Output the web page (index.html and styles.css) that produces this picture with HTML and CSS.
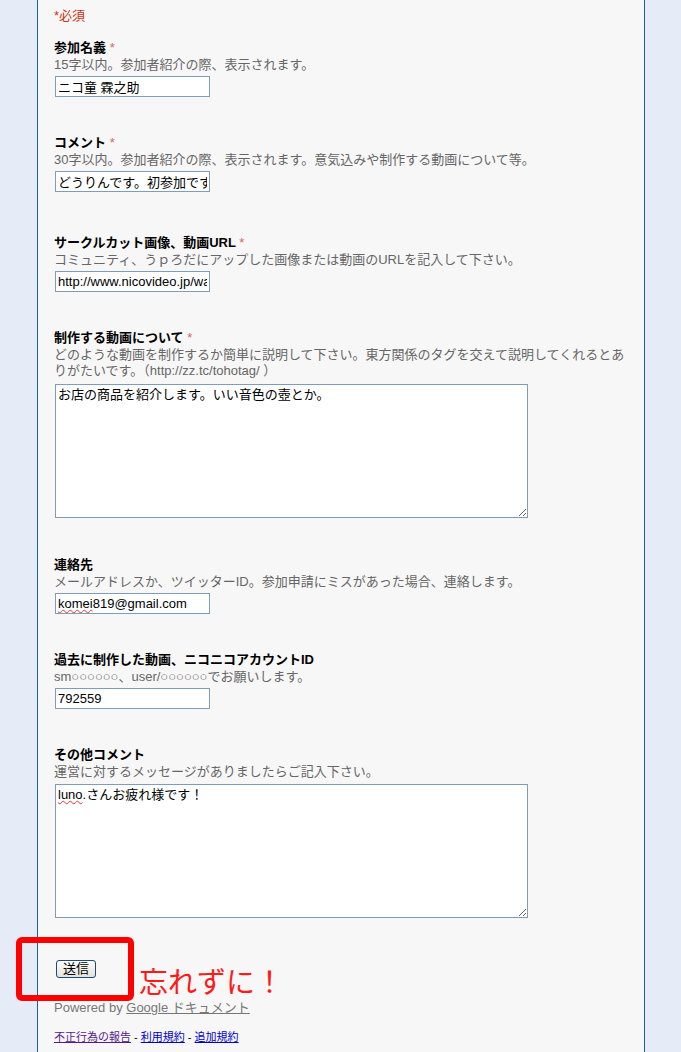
FILE: index.html
```html
<!DOCTYPE html>
<html lang="ja">
<head>
<meta charset="UTF-8">
<title>参加申請フォーム</title>
<link rel="stylesheet" href="styles.css">
</head>
<body>

<div class="form-container">
  <div class="required-note">*必須</div>

  <div class="item first">
    <div class="q-title">参加名義 <span class="req">*</span></div>
    <div class="q-help">15字以内。参加者紹介の際、表示されます。</div>
    <input type="text" class="q-text" value="ニコ童 霖之助">
  </div>

  <div class="item">
    <div class="q-title">コメント <span class="req">*</span></div>
    <div class="q-help">30字以内。参加者紹介の際、表示されます。意気込みや制作する動画について等。</div>
    <input type="text" class="q-text" value="どうりんです。初参加です。よろしくお願いします。">
  </div>

  <div class="item wide-gap">
    <div class="q-title">サークルカット画像、動画URL <span class="req">*</span></div>
    <div class="q-help">コミュニティ、うｐろだにアップした画像または動画のURLを記入して下さい。</div>
    <input type="text" class="q-text" value="http://www.nicovideo.jp/watch/sm">
  </div>

  <div class="item">
    <div class="q-title">制作する動画について <span class="req">*</span></div>
    <div class="q-help">どのような動画を制作するか簡単に説明して下さい。東方関係のタグを交えて説明してくれるとありがたいです。（http://zz.tc/tohotag/ ）</div>
    <textarea class="q-area tall-help">お店の商品を紹介します。いい音色の壺とか。</textarea>
  </div>

  <div class="item after-area">
    <div class="q-title">連絡先</div>
    <div class="q-help">メールアドレスか、ツイッターID。参加申請にミスがあった場合、連絡します。</div>
    <div class="q-text fake"><span class="typo">komei</span>819@gmail.com</div>
  </div>

  <div class="item">
    <div class="q-title">過去に制作した動画、ニコニコアカウントID</div>
    <div class="q-help">sm○○○○○○、user/○○○○○○でお願いします。</div>
    <input type="text" class="q-text" value="792559">
  </div>

  <div class="item">
    <div class="q-title">その他コメント</div>
    <div class="q-help">運営に対するメッセージがありましたらご記入下さい。</div>
    <div class="q-area fake"><span class="typo">luno</span>.さんお疲れ様です！</div>
  </div>

  <div class="submit-row">
    <button class="submit-btn">送信</button>
    <div class="mark-box"></div>
    <div class="mark-text">忘れずに！</div>
  </div>

  <div class="powered">Powered by <a href="#">Google ドキュメント</a></div>

  <div class="footer-links">
    <a href="#" class="visited">不正行為の報告</a> - <a href="#">利用規約</a> - <a href="#">追加規約</a>
  </div>
</div>

</body>
</html>
```

FILE: styles.css
```css
body {
  margin: 0;
  background-color: #e5ecf8;
  font-family: "Liberation Sans", "Noto Sans CJK JP", sans-serif;
  font-size: 13px;
}
.form-container {
  margin-left: 37px;
  width: 608px;
  min-height: 1052px;
  box-sizing: border-box;
  background-color: #f7f7f7;
  border-left: 1px solid #1f5fa8;
  border-right: 1px solid #1f5fa8;
  padding: 7px 16px 0 16px;
}
.required-note {
  color: #cc3311;
  line-height: 17px;
}
.item {
  display: flex;
  flex-direction: column;
  align-items: flex-start;
  margin-top: 37px;
}
.item.first {
  margin-top: 15px;
}
.item.wide-gap {
  margin-top: 42px;
}
.item.after-area {
  margin-top: 38px;
}
.q-title {
  font-weight: bold;
  line-height: 17px;
  color: #000;
}
.req {
  color: #dd6655;
  font-weight: normal;
}
.q-help {
  color: #666;
  line-height: 16px;
  margin-top: 1px;
}
.q-text {
  margin: 3px 0 0 1px;
  width: 155px;
  height: 21px;
  box-sizing: border-box;
  border: 1px solid #7f9db9;
  background: #fff;
  padding: 0 2px;
  font-family: "Liberation Sans", "Noto Sans CJK JP", sans-serif;
  font-size: 13px;
  color: #000;
  overflow: hidden;
  white-space: nowrap;
}
.q-text.fake {
  line-height: 19px;
}
.q-area {
  margin: 4px 0 0 1px;
  width: 473px;
  height: 134px;
  box-sizing: border-box;
  border: 1px solid #7f9db9;
  background: #fff;
  padding: 2px;
  font-family: "Liberation Sans", "Noto Sans CJK JP", sans-serif;
  font-size: 13px;
  line-height: 16px;
  color: #000;
  resize: both;
  overflow: auto;
}
.q-area.tall-help {
  margin-top: 5px;
}
.typo {
  text-decoration: underline wavy #e33;
  text-decoration-thickness: 1px;
}
.submit-row {
  position: relative;
  margin-top: 42px;
  height: 18px;
}
.submit-btn {
  margin-left: 2px;
  width: 40px;
  height: 18px;
  padding: 0;
  font-family: "Liberation Sans", "Noto Sans CJK JP", sans-serif;
  font-size: 13px;
  line-height: 14px;
  color: #000;
  background: linear-gradient(#fdfdfb, #e3e2da);
  border: 1px solid #1c4a7a;
  border-radius: 3px;
}
.mark-box {
  position: absolute;
  left: -38px;
  top: -23px;
  width: 118px;
  height: 64px;
  box-sizing: border-box;
  border: 6px solid #ff0000;
  border-radius: 6px;
}
.mark-text {
  position: absolute;
  left: 85px;
  top: 5px;
  color: #ff1a1a;
  font-size: 29px;
  line-height: 36px;
  white-space: nowrap;
}
.powered {
  margin-top: 22px;
  color: #777;
  line-height: 16px;
}
.powered a {
  color: #777;
}
.footer-links {
  margin-top: 13px;
  font-size: 11px;
  line-height: 16px;
}
.footer-links a {
  color: #0000cc;
}
.footer-links a.visited {
  color: #551a8b;
}
```
